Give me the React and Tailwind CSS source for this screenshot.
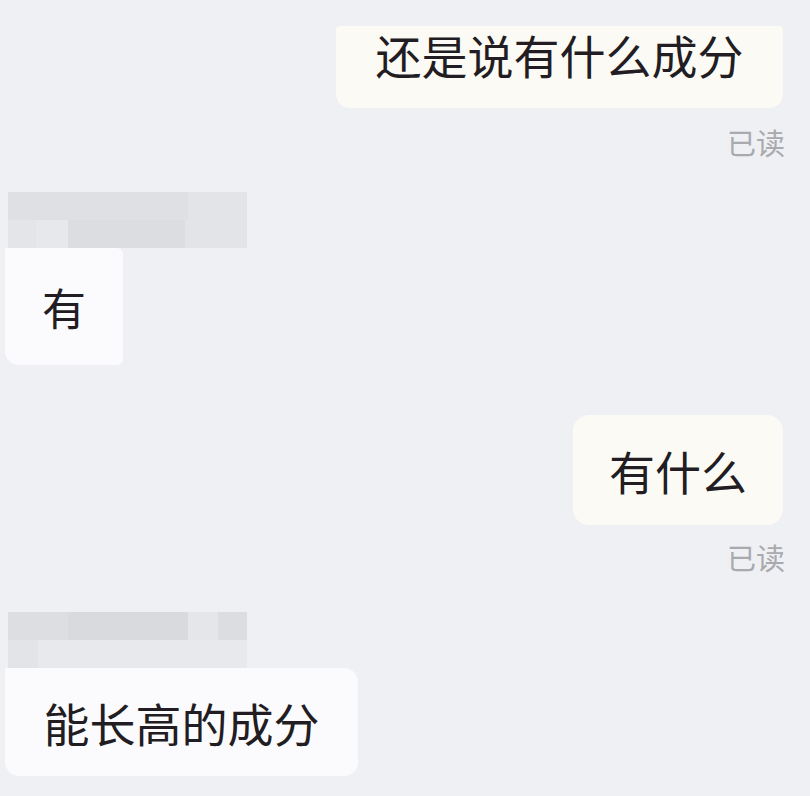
const font = { fontFamily: '"Noto Sans CJK SC", "Noto Sans", sans-serif' };

const BlurName = ({ rows }) => (
  <div className="ml-[8px] w-[239px] flex flex-col">
    {rows.map((row, i) => (
      <div key={i} className="flex h-[28px]">
        {row.map(([w, c], j) => (
          <div key={j} className={`h-full ${c}`} style={{ width: w }} />
        ))}
      </div>
    ))}
  </div>
);

const Read = ({ className }) => (
  <div className={`self-end mr-[25px] text-[29px] leading-none text-[#a9aaad] ${className}`}>
    已读
  </div>
);

export default function App() {
  return (
    <div
      className="w-[810px] h-[796px] overflow-hidden bg-[#eff0f3] flex flex-col"
      style={font}
    >
      <div className="self-end mr-[27px] mt-[26px] h-[82px] w-[447px] pb-[26px] bg-[#fcfaf4] rounded-t-[4px] rounded-br-[14px] rounded-bl-[14px] flex items-center justify-center text-[46px] leading-none text-[#221c23]">
        还是说有什么成分
      </div>
      <Read className="mt-[20px]" />

      <div className="mt-[35px]">
        <BlurName
          rows={[
            [
              [180, "bg-[#dfe0e3]"],
              [59, "bg-[#e3e4e7]"],
            ],
            [
              [28, "bg-[#e4e5e8]"],
              [32, "bg-[#e7e8eb]"],
              [117, "bg-[#dcdde0]"],
              [62, "bg-[#e3e4e7]"],
            ],
          ]}
        />
      </div>

      <div className="ml-[5px] h-[117px] w-[118px] bg-[#fbfbfd] rounded-bl-[14px] rounded-br-[6px] rounded-tr-[6px] flex items-center justify-center text-[44px] leading-none text-[#221c23]">
        有
      </div>

      <div className="self-end mr-[27px] mt-[50px] h-[110px] w-[210px] bg-[#fcfaf4] rounded-[16px] flex items-center justify-center text-[46px] leading-none text-[#221c23]">
        有什么
      </div>
      <Read className="mt-[18px]" />

      <div className="mt-[40px]">
        <BlurName
          rows={[
            [
              [60, "bg-[#dddee1]"],
              [120, "bg-[#d9dadd]"],
              [30, "bg-[#e5e6e9]"],
              [29, "bg-[#dcdde0]"],
            ],
            [
              [30, "bg-[#e3e4e7]"],
              [209, "bg-[#e8e9ec]"],
            ],
          ]}
        />
      </div>

      <div className="ml-[5px] h-[108px] w-[353px] bg-[#fbfbfd] rounded-bl-[14px] rounded-br-[14px] rounded-tr-[14px] flex items-center justify-center text-[46px] leading-none text-[#221c23]">
        能长高的成分
      </div>
    </div>
  );
}
